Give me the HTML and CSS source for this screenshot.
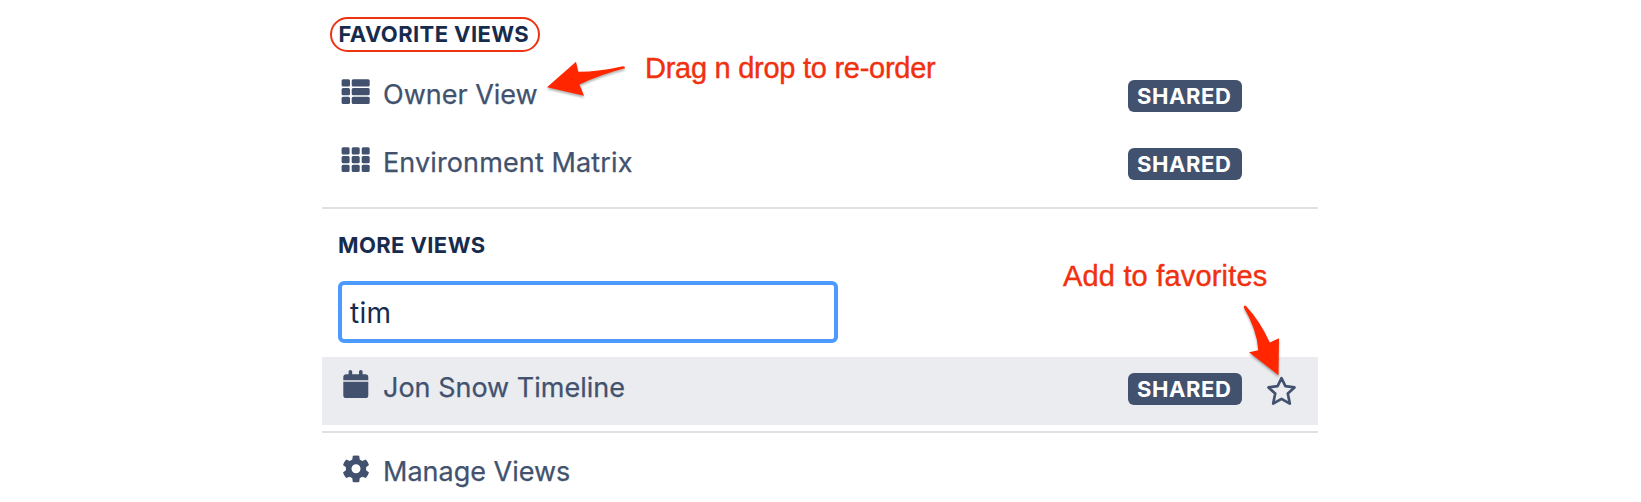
FILE: index.html
```
<!DOCTYPE html>
<html lang="en">
<head>
<meta charset="utf-8">
<title>Views</title>
<link rel="stylesheet" href="styles.css">
</head>
<body>
<main class="menu">
  <h2 class="heading heading-favorites"><span class="ring">FAVORITE VIEWS</span></h2>
  <div class="row">
    <svg class="icon" viewBox="0 0 30 30"><rect x="1.600" y="2.200" width="8.400" height="7.200" rx="1.5"/><rect x="11.700" y="2.200" width="18" height="7.200" rx="1.5"/><rect x="1.600" y="11" width="8.400" height="7.200" rx="1.5"/><rect x="11.700" y="11" width="18" height="7.200" rx="1.5"/><rect x="1.600" y="19.800" width="8.400" height="7.200" rx="1.5"/><rect x="11.700" y="19.800" width="18" height="7.200" rx="1.5"/></svg>
    <span class="name">Owner View</span>
    <span class="badge">SHARED</span>
  </div>
  <div class="row">
    <svg class="icon" viewBox="0 0 30 30"><rect x="1.600" y="2.200" width="8" height="7.200" rx="1.5"/><rect x="11.700" y="2.200" width="8" height="7.200" rx="1.5"/><rect x="21.700" y="2.200" width="8" height="7.200" rx="1.5"/><rect x="1.600" y="11" width="8" height="7.200" rx="1.5"/><rect x="11.700" y="11" width="8" height="7.200" rx="1.5"/><rect x="21.700" y="11" width="8" height="7.200" rx="1.5"/><rect x="1.600" y="19.800" width="8" height="7.200" rx="1.5"/><rect x="11.700" y="19.800" width="8" height="7.200" rx="1.5"/><rect x="21.700" y="19.800" width="8" height="7.200" rx="1.5"/></svg>
    <span class="name name-wide">Environment Matrix</span>
    <span class="badge">SHARED</span>
  </div>
  <hr class="divider">
  <h2 class="heading heading-more">MORE VIEWS</h2>
  <div class="search">tim</div>
  <div class="row row-active">
    <svg class="icon icon-calendar" viewBox="0 0 30 30"><path d="M2.300 10.300V7.200A3 3 0 0 1 5.300 4.200H7.600V1.600Q7.600 0 9.400 0T11.200 1.600V4.200H18V1.600Q18 0 19.800 0T21.600 1.600V4.200H24.300A3 3 0 0 1 27.300 7.200V10.300ZM2.300 11.700H27.300V25.200A2.900 2.900 0 0 1 24.400 28.100H5.200A2.900 2.900 0 0 1 2.300 25.200Z"/></svg>
    <span class="name">Jon Snow Timeline</span>
    <span class="badge">SHARED</span>
    <svg class="star" viewBox="0 0 30 30"><path d="M15.500 2.100L19.400 10.100L28.500 11.400L21.800 17.600L23.800 27.600L15.500 22.900L7.200 27.600L9.200 17.600L2.500 11.400L11.600 10.100Z"/></svg>
  </div>
  <hr class="divider divider-last">
  <div class="row">
    <svg class="icon icon-gear" viewBox="0 0 30 30"><path fill-rule="evenodd" d="M11.800 1.800Q15 1 18.200 1.800L18.700 5.500L21.300 7L24.800 5.600Q27.100 8 28 11.100L25.100 13.300V16.300L28 18.600Q27.100 21.700 24.800 24.100L21.300 22.700L18.700 24.200L18.200 27.900Q15 28.700 11.800 27.900L11.300 24.200L8.700 22.700L5.200 24.100Q2.900 21.700 2 18.600L4.900 16.300V13.300L2 11.100Q2.900 8 5.200 5.600L8.700 7L11.300 5.500ZM15 10.300A4.500 4.500 0 1 0 15 19.300A4.500 4.500 0 1 0 15 10.300Z"/></svg>
    <span class="name">Manage Views</span>
  </div>
</main>
<div class="note note-drag">Drag n drop to re-order</div>
<div class="note note-add">Add to favorites</div>
<svg class="arrows" viewBox="0 0 1641 502">
  <path d="M547 87.300L576 61.700L578.300 71.800Q600 71.500 623 66.200Q625.300 66.200 625 68.300Q602 74 579.500 84.500L584 95.700Z"/>
  <path d="M1278.500 375.300L1249 352.300L1258.300 350.200Q1257 330 1243.700 307.300Q1244 304.700 1246 306Q1260 321 1269.800 342.500L1279 338.300Z"/>
</svg>
</body>
</html>
```
FILE: styles.css
```
body {
  margin: 0;
  height: 502px;
  overflow: hidden;
  position: relative;
  background: #fff;
  color: #42526e;
  font-family: Inter, "Liberation Sans", sans-serif;
}
.menu { width: 996px; margin-left: 322px; padding-top: 17px; }
.heading { margin: 0; color: #172b4d; font-size: 22px; font-weight: 700; line-height: 31px; letter-spacing: 0.4px; }
.heading-favorites { height: 47px; padding-left: 8px; }
.ring {
  display: flex;
  box-sizing: border-box;
  width: 210px;
  height: 35px;
  padding-left: 6.5px;
  border: 2px solid #ee3312;
  border-radius: 18px;
  white-space: nowrap;
}
.heading-more { height: 72px; padding-left: 16px; line-height: 72px; }
.row {
  display: flex;
  align-items: flex-start;
  box-sizing: border-box;
  height: 68px;
  padding: 13px 20px 0 18px;
}
.row-active { background: #ebecf0; margin-top: 14px; }
.icon { width: 30px; height: 30px; fill: #42526e; flex: none; }
.icon-calendar { margin: 0 -1px 0 1px; }
.icon-gear { margin: 0 -0.5px 0 0.5px; }
.name {
  flex: 1;
  margin-left: 13px;
  font-size: 27px;
  line-height: 36px;
  white-space: nowrap;
  -webkit-text-stroke: 0.25px #42526e;
}
.name-wide { letter-spacing: 0.12px; }
.badge {
  box-sizing: border-box;
  width: 114px;
  height: 32px;
  margin: 3px 56px 0 0;
  padding-left: 9px;
  border-radius: 6px;
  background: #42526e;
  color: #fff;
  font-size: 22px;
  font-weight: 700;
  line-height: 32px;
  letter-spacing: 0.6px;
}
.row-active .badge { margin-right: 24px; }
.star { width: 30px; height: 30px; margin: 6px 2px 0 0; fill: none; stroke: #42526e; stroke-width: 2.7; stroke-linejoin: round; }
.divider { height: 2px; margin: 7px 0 0; border: 0; background: #dfe1e5; }
.divider-last { margin: 6px 0 8px; }
.search {
  box-sizing: border-box;
  width: 500px;
  height: 62px;
  margin-left: 16px;
  padding-left: 8px;
  border: 4px solid #4c9aff;
  border-radius: 6px;
  color: #172b4d;
  font-size: 28px;
  line-height: 56px;
  letter-spacing: 0.3px;
}
.note {
  position: absolute;
  color: #f03010;
  font-family: "Liberation Sans", Arial, sans-serif;
  font-size: 29px;
  line-height: 34px;
  white-space: nowrap;
  -webkit-text-stroke: 0.4px #f03010;
}
.note-drag { left: 645px; top: 51px; letter-spacing: -0.27px; }
.note-add { left: 1063px; top: 259px; letter-spacing: 0.18px; }
.arrows { position: absolute; left: 0; top: 0; width: 1641px; height: 502px; fill: #ff2600; filter: drop-shadow(0 2px 1px rgba(0, 0, 0, 0.3)); }
```
